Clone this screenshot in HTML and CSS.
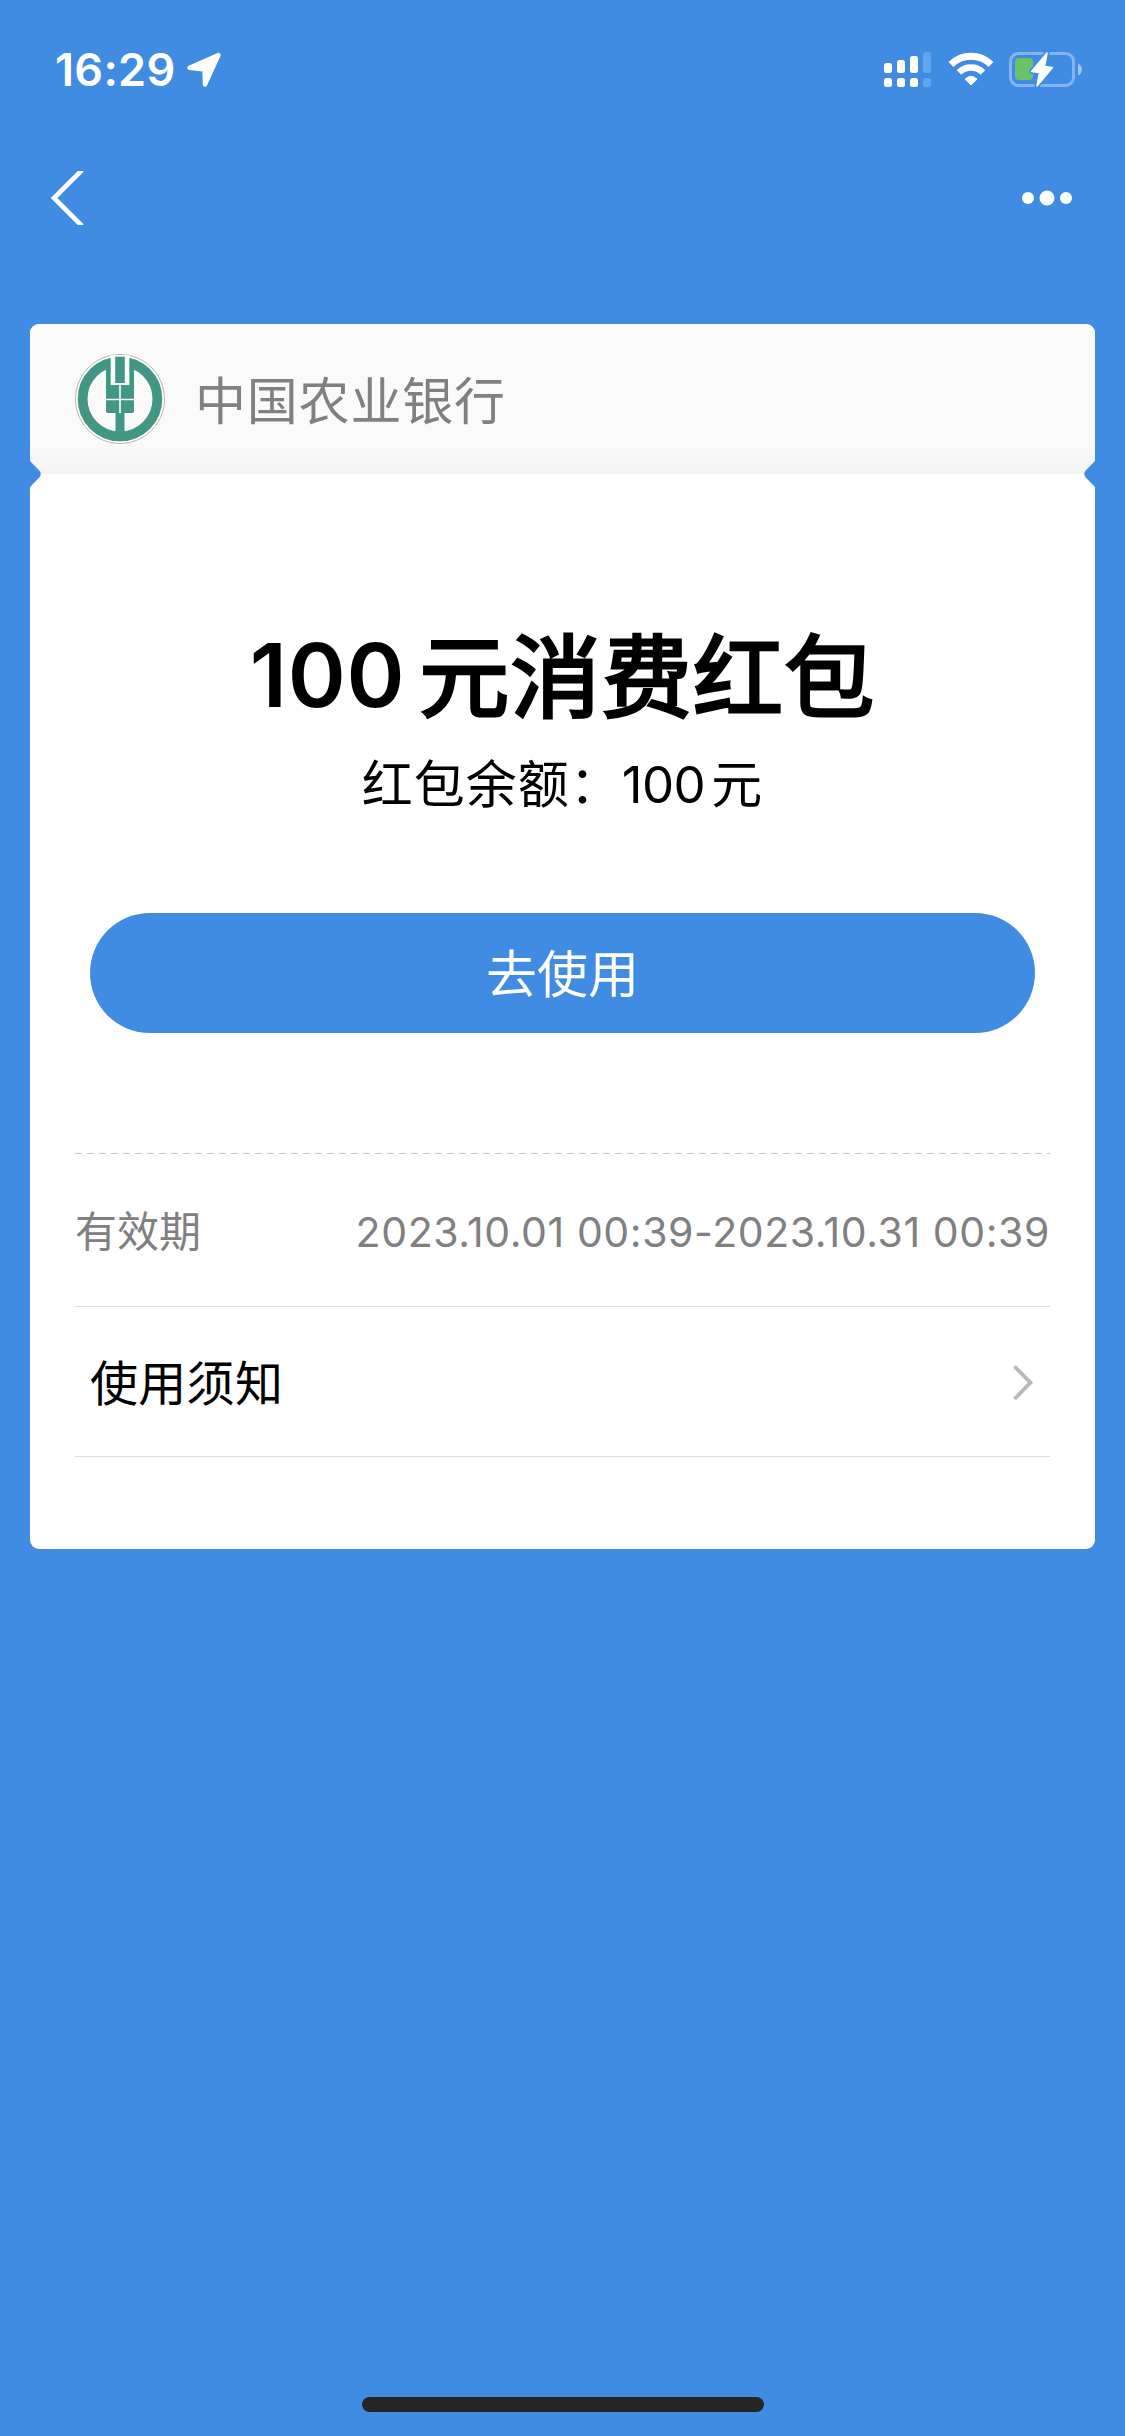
FILE: index.html
```html
<!DOCTYPE html>
<html lang="zh-CN">
<head>
  <meta charset="UTF-8">
  <meta name="viewport" content="width=device-width, initial-scale=1.0">
  <title>100元消费红包</title>
  <link rel="stylesheet" href="styles.css">
</head>
<body>
  <div class="status-bar">
    <div class="status-left">
      <span class="time">16:29</span>
      <svg class="location" width="36" height="36" viewBox="0 0 36 36">
        <path d="M32.5 3 L3.5 15.8 L18.5 17.5 L19 32.5 Z" fill="#fff" stroke="#fff" stroke-width="4.4" stroke-linejoin="round"/>
      </svg>
    </div>
    <div class="status-right">
      <svg class="signal" width="48" height="36" viewBox="0 0 48 36" fill="#fff">
        <rect x="0" y="11" width="8" height="10" rx="2.5"/>
        <rect x="13" y="8" width="8" height="13" rx="2.5"/>
        <rect x="26" y="4" width="8" height="17" rx="2.5"/>
        <rect x="39" y="0" width="8" height="21" rx="2.5" fill="#62a5ec"/>
        <rect x="0" y="26" width="8" height="9" rx="2.5"/>
        <rect x="13" y="26" width="8" height="9" rx="2.5"/>
        <rect x="26" y="26" width="8" height="9" rx="2.5"/>
        <rect x="39" y="26" width="8" height="9" rx="2.5" fill="#62a5ec"/>
      </svg>
      <svg class="wifi" width="46" height="36" viewBox="0 0 46 36">
        <path d="M3 12.5 A28.5 28.5 0 0 1 43 12.5" fill="none" stroke="#fff" stroke-width="7"/>
        <path d="M11 20.5 A17 17 0 0 1 35 20.5" fill="none" stroke="#fff" stroke-width="6.5"/>
        <path d="M17 27.2 Q23 21.5 29 27.2 L23 33 Z" fill="#fff" stroke="#fff" stroke-width="1"/>
      </svg>
      <svg class="battery" width="74" height="36" viewBox="0 0 74 36">
        <rect x="1.5" y="1.5" width="63" height="32" rx="8" fill="none" stroke="#82b5ef" stroke-width="3"/>
        <path d="M69 11.5 Q73 13.5 73 17.5 Q73 21.5 69 23.5 Z" fill="#a0c7f3"/>
        <rect x="6" y="6" width="18" height="22" rx="4" fill="#68c466"/>
        <path d="M38 1 L22.5 19.5 L30.5 20.5 L28 34 L43.5 15.5 L35.5 14.5 Z" fill="#fff" stroke="#408ce2" stroke-width="5" stroke-linejoin="round"/>
        <path d="M38 1 L22.5 19.5 L30.5 20.5 L28 34 L43.5 15.5 L35.5 14.5 Z" fill="#fff" stroke="#fff" stroke-width="1.5" stroke-linejoin="round"/>
      </svg>
    </div>
  </div>

  <div class="nav-bar">
    <svg width="36" height="54" viewBox="0 0 36 54">
      <path d="M32 -1 L4 27 L32 55" fill="none" stroke="#fff" stroke-width="4.6"/>
    </svg>
    <svg width="52" height="16" viewBox="0 0 52 16" fill="#fff">
      <circle cx="6" cy="8" r="6"/>
      <circle cx="25" cy="8" r="7.5"/>
      <circle cx="44" cy="8" r="6"/>
    </svg>
  </div>

  <div class="card">
    <div class="card-header">
      <svg class="logo" width="90" height="90" viewBox="0 0 90 90">
        <circle cx="45" cy="45" r="44.6" fill="#fff" stroke="#aaa0a0" stroke-width="0.8"/>
        <circle cx="45" cy="45" r="37.4" fill="#fafafa" stroke="#429784" stroke-width="9.8"/>
        <path d="M31 10 H59 V57 Q59 59 57 59 H49.5 V80 H40.5 V59 H33 Q31 59 31 57 Z" fill="#429784"/>
        <rect x="35.7" y="1" width="18.6" height="30" fill="#fafafa"/>
        <rect x="40.2" y="2.7" width="9.6" height="26.3" fill="#429784"/>
        <path d="M45 31 V59 M31 45.5 H59" stroke="#fff" stroke-width="1.6"/>
      </svg>
      <span class="bank-name">中国农业银行</span>
    </div>

    <svg class="notch notch-left" width="12" height="26" viewBox="0 0 12 26">
      <path d="M0 0 L9.5 9.8 Q12 13 9.5 16.2 L0 26 Z" fill="#408ce2"/>
    </svg>
    <svg class="notch notch-right" width="12" height="26" viewBox="0 0 12 26">
      <path d="M12 0 L2.5 9.8 Q0 13 2.5 16.2 L12 26 Z" fill="#408ce2"/>
    </svg>

    <div class="card-body">
      <h1 class="title"><span class="num">100</span><span class="name">元消费红包</span></h1>
      <p class="balance">红包余额：<span class="num">100</span>元</p>
      <button class="use-btn">去使用</button>
      <svg class="dashes" width="975" height="1" viewBox="0 0 975 1">
        <path d="M0 0.5 H975" stroke="#c4c4c4" stroke-width="1" stroke-dasharray="7 5"/>
      </svg>
      <div class="row validity">
        <span class="label">有效期</span>
        <span class="date">2023.10.01 00:39-2023.10.31 00:39</span>
      </div>
      <div class="row notice">
        <span class="label">使用须知</span>
        <svg width="20" height="36" viewBox="0 0 20 36">
          <path d="M1.5 2.5 L17.5 18.7 L1.5 35" fill="none" stroke="#b8b8b8" stroke-width="3.8"/>
        </svg>
      </div>
    </div>
  </div>

  <div class="home-indicator"></div>
</body>
</html>
```
FILE: styles.css
```css
* {
  box-sizing: border-box;
}
body {
  margin: 0;
  height: 2436px;
  display: flex;
  flex-direction: column;
  background-color: #408ce2;
  font-family: Inter, "Noto Sans CJK SC", sans-serif;
  color: #000;
  overflow: hidden;
}
.status-bar {
  height: 132px;
  padding: 0 42px 0 55px;
  display: flex;
  justify-content: space-between;
}
.status-left, .status-right {
  display: flex;
  align-items: flex-start;
  padding-top: 52px;
}
.time {
  font-size: 45px;
  line-height: 35px;
  font-weight: 600;
  letter-spacing: 0.3px;
  color: #fff;
}
.location {
  margin-left: 11px;
}
.wifi {
  margin-left: 16px;
}
.battery {
  margin-left: 15px;
}
.nav-bar {
  height: 132px;
  padding: 0 51px 0 50px;
  display: flex;
  align-items: center;
  justify-content: space-between;
}
.card {
  position: relative;
  width: 1065px;
  height: 1225px;
  margin: 60px auto 0;
  background-color: #fff;
  border-radius: 9px;
  overflow: hidden;
}
.card-header {
  height: 150px;
  padding-left: 45px;
  display: flex;
  align-items: center;
  background: linear-gradient(#fafafa 80%, #f3f3f3);
}
.bank-name {
  margin-left: 30px;
  padding-bottom: 3px;
  font-size: 51px;
  letter-spacing: 0.8px;
  color: #808080;
}
/* ticket cut-outs on both edges */
.notch {
  position: absolute;
  top: 137px;
}
.notch-left {
  left: 0;
}
.notch-right {
  right: 0;
}
.card-body {
  padding: 150px 45px 0;
  display: flex;
  flex-direction: column;
}
.title {
  margin: 0;
  display: flex;
  justify-content: center;
  line-height: 108px;
}
.title .num {
  margin: -3px 14px 3px 0;
  font-size: 88px;
  font-weight: 600;
  letter-spacing: 0.8px;
}
.title .name {
  font-size: 90px;
  font-weight: 400;
  letter-spacing: 1.2px;
  -webkit-text-stroke: 3px #000;
}
.balance {
  margin: 15px 0 0;
  font-size: 51px;
  line-height: 76px;
  letter-spacing: 1px;
  text-align: center;
}
.balance .num {
  letter-spacing: -0.6px;
  margin-right: 6px;
}
.use-btn {
  height: 120px;
  margin: 90px 15px 0;
  padding: 0 0 4px;
  border: none;
  border-radius: 60px;
  background-color: #408ce2;
  color: #fff;
  font-family: inherit;
  font-size: 51px;
}
.dashes {
  margin-top: 120px;
}
.row {
  display: flex;
  align-items: center;
  justify-content: space-between;
  border-bottom: 1px solid #dcdcdc;
}
.row .label {
  padding-bottom: 3px;
}
.validity {
  height: 153px;
  font-size: 42px;
  color: #808080;
}
.date {
  padding-top: 4px;
  font-size: 41px;
  letter-spacing: 0.58px;
}
.notice {
  height: 150px;
  padding: 0 17px 0 15px;
  font-size: 48px;
  letter-spacing: 0.3px;
}
.home-indicator {
  width: 402px;
  height: 15px;
  margin: auto auto 24px;
  border-radius: 8px;
  background-color: #252525;
}
```
